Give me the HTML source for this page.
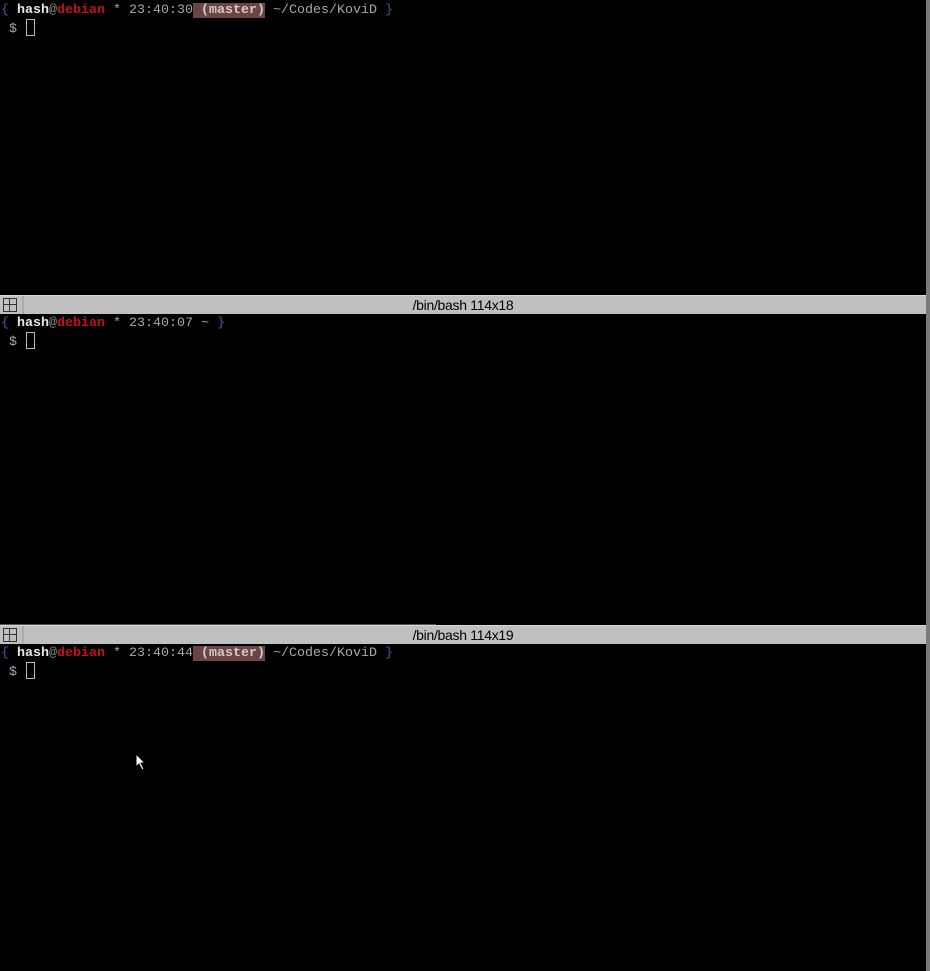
<!DOCTYPE html>
<html><head><style>
body{margin:0;width:930px;height:971px;background:#000;overflow:hidden;position:relative;font-family:"Liberation Mono","DejaVu Sans Mono",monospace;font-size:13.33px;}
.p{position:absolute;left:1px;white-space:pre;line-height:17px;color:#a8a8a8;}
.b{color:#3d5fa8}.w{color:#e8e8e8;font-weight:bold}.at{color:#8a8a8a}.r{color:#c2121f;font-weight:bold}
.m{background:#6a4545;color:#d8c8c8;font-weight:bold}
.cur{display:inline-block;width:7px;height:15px;border:1px solid #bbb;vertical-align:-4px;margin-left:9px}
.bar{position:absolute;left:0;width:926px;height:18px;background:#c0c0c0;border-top:1px solid #d8d8d8;font-family:"Liberation Sans",sans-serif;font-size:14px;color:#000;text-align:center;line-height:18px;letter-spacing:-0.3px}
.bar .ic{position:absolute;left:3px;top:2px;width:12px;height:12px;border:1px solid #333;}
.bar .sep{position:absolute;left:22px;top:0;width:2px;height:18px;background:#aaa}
.rs{position:absolute;right:0;top:0;width:4px;height:971px;background:#7a7a7a}
</style></head><body>
<div class="p" style="top:2px"><span class="b">{</span> <span class="w">hash</span><span class="at">@</span><span class="r">debian</span> * 23:40:30<span class="m"> (master)</span> ~/Codes/KoviD <span class="b">}</span>
 $<span class="cur"></span></div>
<div class="bar" style="top:295px"><div class="ic"><div style="position:absolute;left:5px;top:0;width:1px;height:12px;background:#333"></div><div style="position:absolute;left:0;top:5px;width:12px;height:1px;background:#333"></div></div><div class="sep"></div>/bin/bash 114x18</div>
<div class="p" style="top:315px"><span class="b">{</span> <span class="w">hash</span><span class="at">@</span><span class="r">debian</span> * 23:40:07 ~ <span class="b">}</span>
 $<span class="cur"></span></div>
<div style="position:absolute;left:0;top:624px;width:436px;height:2px;background:#555"></div>
<div class="bar" style="top:625px"><div class="ic"><div style="position:absolute;left:5px;top:0;width:1px;height:12px;background:#333"></div><div style="position:absolute;left:0;top:5px;width:12px;height:1px;background:#333"></div></div><div class="sep"></div>/bin/bash 114x19</div>
<div class="p" style="top:645px"><span class="b">{</span> <span class="w">hash</span><span class="at">@</span><span class="r">debian</span> * 23:40:44<span class="m"> (master)</span> ~/Codes/KoviD <span class="b">}</span>
 $<span class="cur"></span></div>
<svg style="position:absolute;left:135px;top:753px" width="12" height="18"><path d="M1 1 L1 14 L4 11 L7 17 L9 16 L6 10 L10 10 Z" fill="#fff" stroke="#000" stroke-width="1"/></svg>
<div class="rs"></div>
</body></html>
